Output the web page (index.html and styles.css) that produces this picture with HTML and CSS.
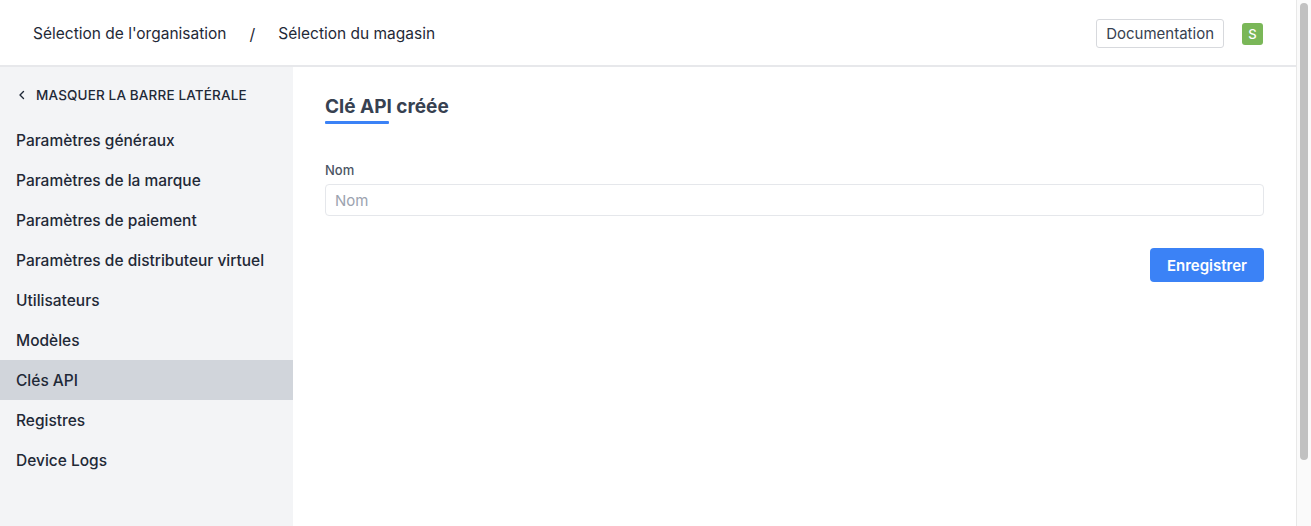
FILE: index.html
```html
<!DOCTYPE html>
<html lang="fr">
<head>
<meta charset="utf-8">
<title>Clé API créée</title>
<link rel="stylesheet" href="styles.css">
</head>
<body>
<div class="app">
  <div class="page">
    <header class="topbar">
      <nav class="crumbs">
        <span class="crumb">Sélection de l'organisation</span>
        <span class="sep">/</span>
        <span class="crumb">Sélection du magasin</span>
      </nav>
      <div class="top-actions">
        <a class="doc-btn">Documentation</a>
        <span class="avatar">S</span>
      </div>
    </header>
    <div class="body">
      <aside class="sidebar">
        <div class="toggle">
          <svg class="chev" width="8" height="10" viewBox="0 0 8 10"><path d="M5.5 1.5 2 5l3.5 3.5" fill="none" stroke="#1f2937" stroke-width="1.4" stroke-linecap="round" stroke-linejoin="round"/></svg>
          <span>MASQUER LA BARRE LATÉRALE</span>
        </div>
        <ul class="menu">
          <li>Paramètres généraux</li>
          <li>Paramètres de la marque</li>
          <li>Paramètres de paiement</li>
          <li>Paramètres de distributeur virtuel</li>
          <li>Utilisateurs</li>
          <li>Modèles</li>
          <li class="active">Clés API</li>
          <li>Registres</li>
          <li>Device Logs</li>
        </ul>
      </aside>
      <main class="main">
        <h1 class="title">Clé API créée</h1>
        <form class="form">
          <label class="label" for="nom">Nom</label>
          <input class="input" id="nom" type="text" placeholder="Nom">
          <div class="actions">
            <button type="button" class="primary">Enregistrer</button>
          </div>
        </form>
      </main>
    </div>
  </div>
  <div class="scrollbar"><div class="thumb"></div></div>
</div>
</body>
</html>
```
FILE: styles.css
```css
* { box-sizing: border-box; }
html, body { margin: 0; height: 100%; }
body {
  font-family: Inter, "Noto Sans", "Liberation Sans", sans-serif;
  color: #1f2937;
  background: #fff;
  overflow: hidden;
}
.app { display: flex; height: 100vh; }
.page { flex: 1; display: flex; flex-direction: column; min-width: 0; }

.topbar {
  height: 67px;
  flex: none;
  display: flex;
  align-items: center;
  justify-content: space-between;
  padding: 2px 33px 0;
  border-bottom: 2px solid #e7e8eb;
}
.crumbs { display: flex; align-items: center; gap: 23px; font-size: 15.5px; color: #1f2937; }
.sep { font-size: 16px; }
.top-actions { display: flex; align-items: center; gap: 18px; }
.doc-btn {
  display: inline-flex; align-items: center;
  height: 29px; padding: 0 9px;
  border: 1px solid #d7d9dd; border-radius: 3px;
  font-size: 15px; color: #374151;
}
.avatar {
  width: 21px; height: 22px; border-radius: 3px;
  background: #7ab758; color: #fff;
  font-size: 13px; font-weight: 500;
  display: inline-flex; align-items: center; justify-content: center;
}

.body { flex: 1; display: flex; min-height: 0; }
.sidebar { width: 293px; flex: none; background: #f3f4f6; }
.toggle {
  height: 53px; display: flex; align-items: center; gap: 10px;
  padding-left: 18px; padding-top: 2px;
  font-size: 13.5px; font-weight: 500; color: #1f2937; letter-spacing: 0.15px;
}
.menu { list-style: none; margin: 0; padding: 0; }
.menu li {
  height: 40px; display: flex; align-items: center;
  padding-left: 16px; font-size: 15.5px; font-weight: 500; color: #1f2937;
}
.menu li.active { background: #d1d5db; }

.main { flex: 1; padding: 25px 32px 32px; }
.title { margin: 0; font-size: 19px; line-height: 28px; font-weight: 700; color: #374151; padding-top: 1px; }
.title::after {
  content: ""; display: block; width: 64px; height: 3px;
  margin-top: 0; background: #3b82f6; border-radius: 1px;
}
.form { display: flex; flex-direction: column; margin-top: 36px; }
.label { font-size: 13px; line-height: 20px; font-weight: 500; color: #4b5563; }
.input {
  margin-top: 4px; height: 32px; width: 100%;
  border: 1px solid #e5e7eb; border-radius: 4px;
  padding: 0 9px; font: inherit; font-size: 15px; color: #1f2937;
}
.input::placeholder { color: #9ca3af; }
.actions { display: flex; justify-content: flex-end; margin-top: 32px; }
.primary {
  height: 34px; width: 114px; border: 0; border-radius: 4px;
  background: #3b82f6; color: #fff;
  font: inherit; font-size: 15px; font-weight: 600;
}

.scrollbar {
  width: 15px; flex: none; background: #fafafa;
  border-left: 1px solid #e8e8e8;
  padding: 3px 3px 0 3px;
}
.thumb { height: 457px; border-radius: 4px; background: #c1c1c1; }
```
